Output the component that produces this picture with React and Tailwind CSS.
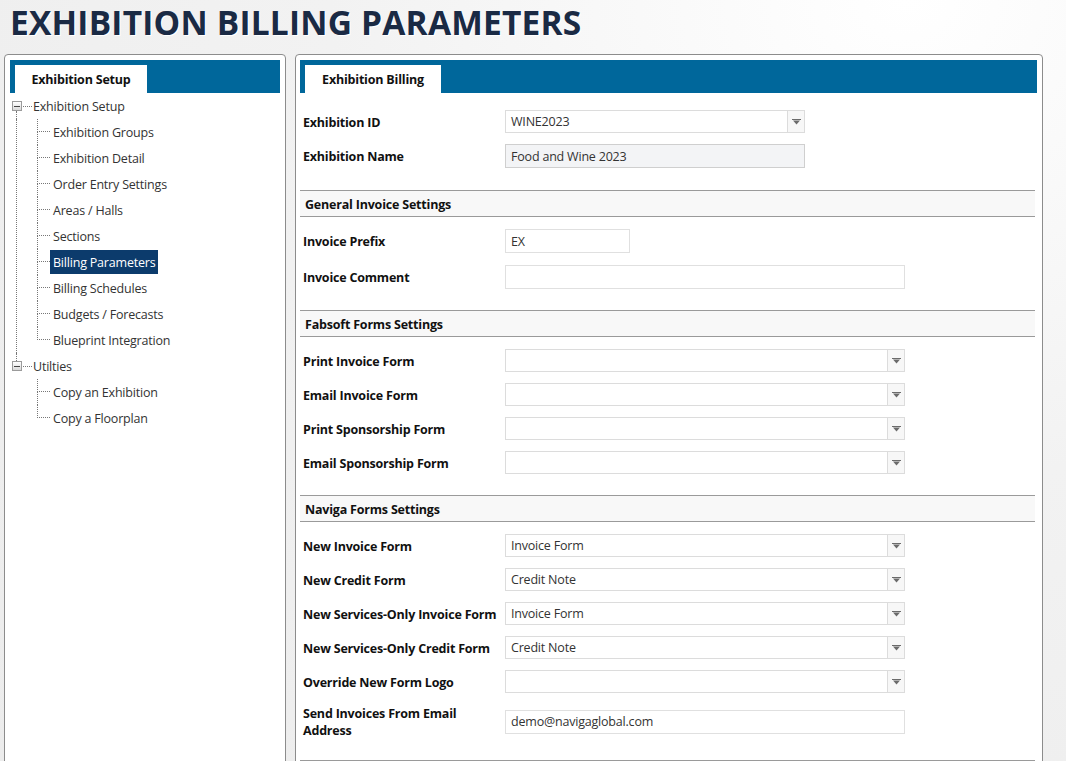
import React from "react";

const FONT = "[font-family:'Open_Sans','Noto_Sans',sans-serif]";
const TXT = "text-[12.5px] tracking-[-0.2px]";

const Arrow = () => (
  <svg width="9" height="6" viewBox="0 0 9 6" aria-hidden="true">
    <rect x="0" y="0" width="9" height="1" fill="#6b6b6b" />
    <polygon points="1,1.5 8,1.5 4.5,5.5" fill="#6b6b6b" />
  </svg>
);

const Select = ({ value, w = "w-[400px]" }) => (
  <div className={`${w} h-[23px] flex border border-[#dcdcdc] bg-white`}>
    <div className={`flex-1 flex items-center px-[5px] pt-[2px] ${TXT} text-[#333] leading-none`}>{value}</div>
    <div className="w-[17px] flex items-center justify-center border-l border-[#dcdcdc] bg-[#f7f7f7]">
      <Arrow />
    </div>
  </div>
);

const TextBox = ({ value, w = "w-[400px]", disabled }) => (
  <div
    className={`${w} h-[24px] flex items-center px-[5px] pt-[2px] leading-none ${TXT} text-[#333] border ${
      disabled ? "bg-[#f3f4f6] border-[#cfcfcf]" : "bg-white border-[#e0e0e0]"
    }`}
  >
    {value}
  </div>
);

const Row = ({ label, children, tall }) => (
  <div className={`flex items-center ${tall ? "min-h-[35px]" : ""}`}>
    <div className={`w-[205px] shrink-0 pl-[3px] pt-[1px] ${TXT} font-bold text-[#111] leading-[17px] ${tall ? "" : "whitespace-nowrap"}`}>
      {label}
    </div>
    {children}
  </div>
);

const Section = ({ title }) => (
  <div className={`h-[27px] mr-[2px] flex items-center pl-[5px] pt-[3px] border-y border-[#9a9a9a] bg-[#f8f8f8] ${TXT} font-bold text-[#111]`}>
    {title}
  </div>
);

const MinusBox = () => (
  <div className="w-[10px] h-[10px] border border-[#9b9b9b] bg-gradient-to-b from-white to-[#d9d9d9] flex items-center justify-center">
    <div className="w-[6px] h-[1px] bg-[#444]" />
  </div>
);

const Child = ({ label, last, active }) => (
  <div className="flex h-[26px]">
    <div className="w-[13px] flex flex-col">
      <div className="h-[13px] border-l border-b border-dotted border-[#777]" />
      <div className={`flex-1 ${last ? "" : "border-l border-dotted border-[#777]"}`} />
    </div>
    <div className="flex items-center">
      <span
        className={`px-[3px] pt-[2px] h-[24px] flex items-center ${TXT} ${
          active ? "bg-[#0c3b6c] text-white" : "text-[#333]"
        }`}
      >
        {label}
      </span>
    </div>
  </div>
);

const RootNode = ({ label, lineDown, lineUp }) => (
  <div className="flex h-[26px] items-center">
    <div className="ml-[2px] w-[10px] h-full flex flex-col">
      <div className={`flex-1 ml-[4px] ${lineUp ? "border-l border-dotted border-[#777]" : ""}`} />
      <MinusBox />
      <div className={`flex-1 ml-[4px] ${lineDown ? "border-l border-dotted border-[#777]" : ""}`} />
    </div>
    <div className="w-[9px] ml-[1px] border-t border-dotted border-[#777]" />
    <span className={`ml-[1px] pt-[2px] ${TXT} text-[#333]`}>{label}</span>
  </div>
);

const setupItems = [
  "Exhibition Groups",
  "Exhibition Detail",
  "Order Entry Settings",
  "Areas / Halls",
  "Sections",
  "Billing Parameters",
  "Billing Schedules",
  "Budgets / Forecasts",
  "Blueprint Integration",
];

const TabBar = ({ label, tabW }) => (
  <div className="h-[33px] bg-[#00679b] flex items-end pl-[5px]">
    <div className={`${tabW} h-[28px] pt-[2px] bg-white flex items-center justify-center ${TXT} font-bold text-[#111]`}>
      {label}
    </div>
  </div>
);

export default function App() {
  return (
    <div
      className={`${FONT} h-[761px] overflow-hidden bg-[radial-gradient(ellipse_at_85%_0%,#ffffff_0%,#f2f2f2_45%,#ececec_100%)]`}
    >
      <h1 className="pl-[10px] pb-[10px] text-[33.5px] font-bold leading-[44px] text-[#1a2a44] tracking-[0.2px] whitespace-nowrap [text-shadow:1px_1px_0_#fff]">
        EXHIBITION BILLING PARAMETERS
      </h1>
      <div className="flex pl-[4px] gap-[9px]">
        {/* left tree panel */}
        <aside className="w-[282px] h-[740px] shrink-0 bg-white border border-[#8c8c8c] rounded-[4px] p-[5px]">
          <TabBar label="Exhibition Setup" tabW="w-[132px]" />
          <div>
            <RootNode label="Exhibition Setup" lineDown />
            <div className="ml-[6px] border-l border-dotted border-[#777] pl-[20px]">
              {setupItems.map((it, i) => (
                <Child key={it} label={it} last={i === setupItems.length - 1} active={it === "Billing Parameters"} />
              ))}
            </div>
            <RootNode label="Utilties" lineUp />
            <div className="ml-[6px] pl-[21px]">
              <Child label="Copy an Exhibition" />
              <Child label="Copy a Floorplan" last />
            </div>
          </div>
        </aside>

        {/* right form panel */}
        <main className="w-[748px] h-[740px] shrink-0 bg-white border border-[#8c8c8c] rounded-[4px] pt-[5px] pl-[4px] pr-[5px]">
          <TabBar label="Exhibition Billing" tabW="w-[136px]" />
          <div className="pt-[17px] flex flex-col gap-[11px]">
            <Row label="Exhibition ID">
              <Select value="WINE2023" w="w-[300px]" />
            </Row>
            <Row label="Exhibition Name">
              <TextBox value="Food and Wine 2023" w="w-[300px]" disabled />
            </Row>
          </div>

          <div className="mt-[22px]">
            <Section title="General Invoice Settings" />
          </div>
          <div className="pt-[12px] flex flex-col gap-[12px]">
            <Row label="Invoice Prefix">
              <TextBox value="EX" w="w-[125px]" />
            </Row>
            <Row label="Invoice Comment">
              <TextBox value="" />
            </Row>
          </div>

          <div className="mt-[21px]">
            <Section title="Fabsoft Forms Settings" />
          </div>
          <div className="pt-[12px] flex flex-col gap-[11px]">
            <Row label="Print Invoice Form"><Select value="" /></Row>
            <Row label="Email Invoice Form"><Select value="" /></Row>
            <Row label="Print Sponsorship Form"><Select value="" /></Row>
            <Row label="Email Sponsorship Form"><Select value="" /></Row>
          </div>

          <div className="mt-[21px]">
            <Section title="Naviga Forms Settings" />
          </div>
          <div className="pt-[12px] flex flex-col gap-[11px]">
            <Row label="New Invoice Form"><Select value="Invoice Form" /></Row>
            <Row label="New Credit Form"><Select value="Credit Note" /></Row>
            <Row label="New Services-Only Invoice Form"><Select value="Invoice Form" /></Row>
            <Row label="New Services-Only Credit Form"><Select value="Credit Note" /></Row>
            <Row label="Override New Form Logo"><Select value="" /></Row>
            <Row label={<span>Send Invoices From Email<br />Address</span>} tall>
              <TextBox value="demo@navigaglobal.com" />
            </Row>
          </div>
          <div className="mt-[21px]">
            <Section title="" />
          </div>
        </main>
      </div>
    </div>
  );
}
